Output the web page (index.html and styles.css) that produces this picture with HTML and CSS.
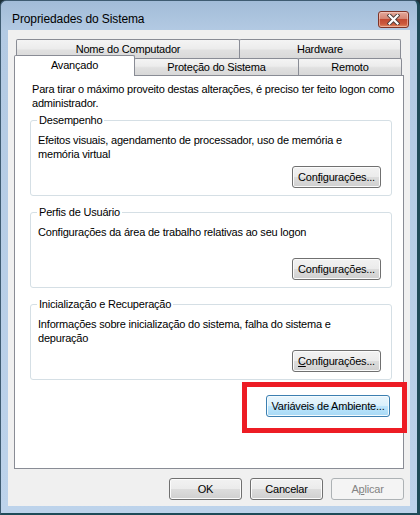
FILE: index.html
```html
<!DOCTYPE html>
<html lang="pt-BR">
<head>
  <meta charset="UTF-8">
  <meta name="viewport" content="width=device-width, initial-scale=1.0">
  <title>Propriedades do Sistema</title>
  <link rel="stylesheet" href="styles.css">
</head>
<body>
  <div class="window">
    <div class="titlebar">
      <span class="title">Propriedades do Sistema</span>
      <button class="close" aria-label="Fechar">
        <svg width="13" height="11" viewBox="0 0 13 11">
          <path d="M2.5 1.5 L10.5 9.5 M10.5 1.5 L2.5 9.5" stroke="#4a3b38" stroke-width="4" stroke-linecap="square"/>
          <path d="M2.5 1.5 L10.5 9.5 M10.5 1.5 L2.5 9.5" stroke="#ffffff" stroke-width="2.2" stroke-linecap="square"/>
        </svg>
      </button>
    </div>

    <div class="client">
      <div class="tabs">
        <div class="tab-row back">
          <div class="tab tab-name">Nome do Computador</div>
          <div class="tab tab-hw">Hardware</div>
        </div>
        <div class="tab-row front">
          <div class="tab selected">Avançado</div>
          <div class="tab tab-prot">Proteção do Sistema</div>
          <div class="tab tab-rem">Remoto</div>
        </div>
      </div>

      <div class="panel">
        <p class="intro">Para tirar o máximo proveito destas alterações, é preciso ter feito logon como<br>administrador.</p>

        <fieldset class="group">
          <legend>Desempenho</legend>
          <p class="desc">Efeitos visuais, agendamento de processador, uso de memória e<br>memória virtual</p>
          <div class="group-actions">
            <button class="btn btn-config">Con<u>f</u>igurações...</button>
          </div>
        </fieldset>

        <fieldset class="group">
          <legend>Perfis de Usuário</legend>
          <p class="desc">Configurações da área de trabalho relativas ao seu logon</p>
          <div class="group-actions">
            <button class="btn btn-config">Confi<u>g</u>urações...</button>
          </div>
        </fieldset>

        <fieldset class="group">
          <legend>Inicialização e Recuperação</legend>
          <p class="desc">Informações sobre inicialização do sistema, falha do sistema e<br>depuração</p>
          <div class="group-actions">
            <button class="btn btn-config"><u>C</u>onfigurações...</button>
          </div>
        </fieldset>

        <div class="panel-actions">
          <button class="btn btn-env">Variáveis de Ambiente...</button>
        </div>
      </div>

      <div class="dialog-actions">
        <button class="btn btn-dlg">OK</button>
        <button class="btn btn-dlg">Cancelar</button>
        <button class="btn btn-dlg" disabled>A<u>p</u>licar</button>
      </div>
    </div>

    <div class="highlight"></div>
  </div>
</body>
</html>
```

FILE: styles.css
```css
html,
body {
  margin: 0;
  padding: 0;
  background: #1c2f38;
}
body {
  font-family: "Liberation Sans", Arial, sans-serif;
  font-size: 11px;
  letter-spacing: -0.2px;
  color: #000;
}
.window {
  position: relative;
  box-sizing: border-box;
  width: 420px;
  height: 515px;
  display: flex;
  flex-direction: column;
  border: 1px solid #3f5c72;
  border-right-width: 3px;
  border-bottom-width: 2px;
  border-right-color: #1f4b58;
  border-bottom-color: #1f4b58;
  border-radius: 6px 6px 0 0;
  padding: 0 7px 7px 7px;
  background: linear-gradient(to bottom, #a2bcd8 0, #b3cae3 30px, #bdd3eb 100%);
}
.titlebar {
  height: 29px;
  display: flex;
  justify-content: space-between;
  align-items: flex-start;
  padding-top: 10px;
  box-sizing: border-box;
}
.title {
  margin-left: 4px;
  line-height: 17px;
  font-size: 12px;
  letter-spacing: -0.1px;
}
.close {
  width: 31px;
  height: 17px;
  margin-right: 1px;
  padding: 0;
  display: flex;
  align-items: center;
  justify-content: center;
  border: 1px solid #7e3427;
  border-radius: 3px;
  background: linear-gradient(to bottom, #e3a99b 0%, #d58573 45%, #c24a31 50%, #cc5a3d 80%, #e08a62 100%);
  box-shadow: inset 0 0 0 1px rgba(255, 220, 210, 0.5);
}
.client {
  flex: 1;
  display: flex;
  flex-direction: column;
  background: #f0f0f0;
  padding: 9px 6px 6px 6px;
}

/* tabs */
.tabs {
  display: flex;
  flex-direction: column;
}
.tab-row {
  display: flex;
}
.tab-row.back {
  height: 20px;
  margin: 0 3px 0 2px;
}
.tab-row.front {
  height: 17px;
  margin: -1px 2px 0 0;
  align-items: flex-start;
}
.tab {
  box-sizing: border-box;
  height: 100%;
  text-align: center;
  border: 1px solid #898c95;
  border-bottom: none;
  border-radius: 2px 2px 0 0;
  background: linear-gradient(to bottom, #f4f4f4 0%, #ececec 45%, #e0e0e0 55%, #d8d8d8 100%);
  white-space: nowrap;
}
.tab + .tab {
  margin-left: -1px;
}
.back .tab {
  line-height: 18px;
}
.front .tab {
  line-height: 16px;
}
.tab-name {
  width: 224px;
}
.tab-hw {
  flex: 1;
}
.tab.selected {
  width: 121px;
  height: 21px;
  margin-top: -3px;
  padding-top: 1px;
  background: #fff;
  z-index: 1;
}
.tab-prot {
  width: 165px;
}
.tab-rem {
  flex: 1;
}

/* panel */
.panel {
  flex: 1;
  display: flex;
  flex-direction: column;
  background: #fff;
  border: 1px solid #898c95;
  padding: 6px 11px 0 15px;
}
.intro {
  margin: 0 0 3px 2px;
  line-height: 14px;
  white-space: nowrap;
}
.group {
  margin: 0 0 9px 0;
  padding: 0 10px 7px 6px;
  border: 1px solid #d5dfe5;
  border-radius: 3px;
  min-inline-size: 0;
}
.group legend {
  padding: 0 2px;
  line-height: 14px;
}
.desc {
  margin: 6px 0 5px 1px;
  line-height: 14px;
  min-height: 28px;
  white-space: nowrap;
}
.group-actions,
.panel-actions,
.dialog-actions {
  display: flex;
  justify-content: flex-end;
}
.panel-actions {
  margin: 6px 2px 0 0;
}
.dialog-actions {
  gap: 8px;
  margin-top: 9px;
}

/* buttons */
.btn {
  box-sizing: border-box;
  height: 22px;
  padding: 0;
  font-family: inherit;
  font-size: 11px;
  letter-spacing: -0.2px;
  white-space: nowrap;
  color: #000;
  border: 1px solid #707070;
  border-radius: 3px;
  background: linear-gradient(to bottom, #f2f2f2 0%, #ebebeb 50%, #dddddd 50%, #cfcfcf 100%);
  box-shadow: inset 0 0 0 1px #fbfbfb;
}
.btn u {
  text-underline-offset: 1px;
}
.btn-config {
  width: 89px;
}
.btn-env {
  width: 124px;
  border-color: #3c7fb1;
  background: linear-gradient(to bottom, #eaf6fd 0%, #d9f0fc 50%, #bee6fd 50%, #a7d9f5 100%);
  box-shadow: inset 0 0 0 1px #f4fbfe;
}
.btn-dlg {
  width: 73px;
}
.btn:disabled {
  color: #838383;
  border-color: #adb2b5;
  background: #f4f4f4;
  box-shadow: none;
}

/* annotation frame drawn over the dialog */
.highlight {
  position: absolute;
  left: 241px;
  top: 381px;
  width: 165px;
  height: 51px;
  box-sizing: border-box;
  border: 5px solid #ed1c24;
}
```
